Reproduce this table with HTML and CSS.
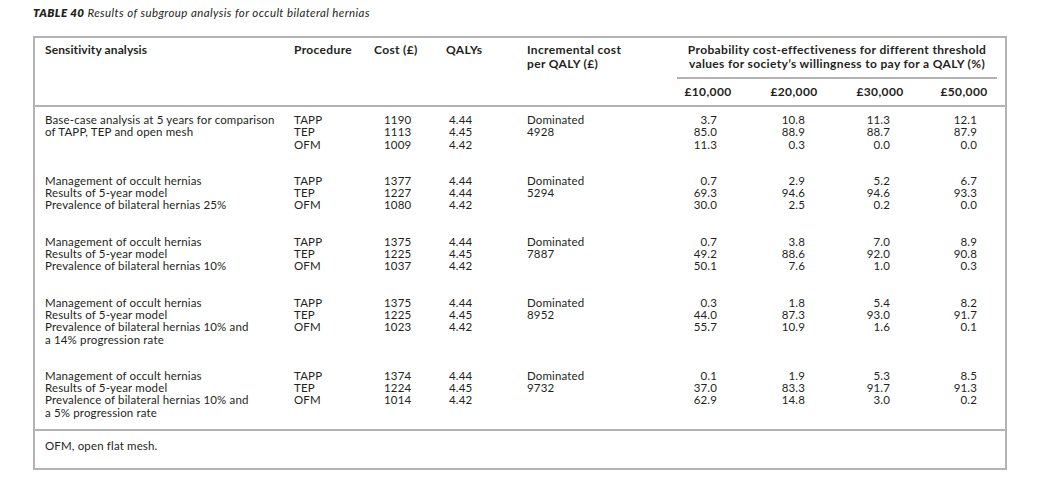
FILE: index.html
```html
<!DOCTYPE html>
<html lang="en">
<head>
<meta charset="utf-8">
<title>Table 40</title>
<link rel="stylesheet" href="styles.css">
</head>
<body>
<div class="page">
  <p class="caption"><b>TABLE 40</b> Results of subgroup analysis for occult bilateral hernias</p>
  <div class="box">
    <table class="tbl">
      <colgroup>
        <col class="w1"><col class="w2"><col class="w3"><col class="w4"><col class="w5">
        <col class="w6"><col class="w7"><col class="w8"><col class="w9">
      </colgroup>
      <thead>
        <tr>
          <th rowspan="2" class="c1">Sensitivity analysis</th>
          <th rowspan="2" class="c2">Procedure</th>
          <th rowspan="2" class="c3">Cost (£)</th>
          <th rowspan="2" class="c4">QALYs</th>
          <th rowspan="2" class="c5">Incremental cost<br>per QALY (£)</th>
          <th colspan="4" class="prob"><div class="prob-line">Probability cost-effectiveness for different threshold<br>values for society’s willingness to pay for a QALY (%)</div></th>
        </tr>
        <tr class="thr">
          <th>£10,000</th><th>£20,000</th><th>£30,000</th><th>£50,000</th>
        </tr>
      </thead>
      <tbody class="grp first">
        <tr><td class="c1">Base-case analysis at 5 years for comparison</td><td class="c2">TAPP</td><td class="c3">1190</td><td class="c4">4.44</td><td class="c5">Dominated</td><td class="p6">3.7</td><td class="p7">10.8</td><td class="p8">11.3</td><td class="p9">12.1</td></tr>
        <tr><td class="c1">of TAPP, TEP and open mesh</td><td class="c2">TEP</td><td class="c3">1113</td><td class="c4">4.45</td><td class="c5">4928</td><td class="p6">85.0</td><td class="p7">88.9</td><td class="p8">88.7</td><td class="p9">87.9</td></tr>
        <tr><td class="c1"></td><td class="c2">OFM</td><td class="c3">1009</td><td class="c4">4.42</td><td class="c5"></td><td class="p6">11.3</td><td class="p7">0.3</td><td class="p8">0.0</td><td class="p9">0.0</td></tr>
      </tbody>
      <tbody class="grp">
        <tr><td class="c1">Management of occult hernias</td><td class="c2">TAPP</td><td class="c3">1377</td><td class="c4">4.44</td><td class="c5">Dominated</td><td class="p6">0.7</td><td class="p7">2.9</td><td class="p8">5.2</td><td class="p9">6.7</td></tr>
        <tr><td class="c1">Results of 5-year model</td><td class="c2">TEP</td><td class="c3">1227</td><td class="c4">4.44</td><td class="c5">5294</td><td class="p6">69.3</td><td class="p7">94.6</td><td class="p8">94.6</td><td class="p9">93.3</td></tr>
        <tr><td class="c1">Prevalence of bilateral hernias 25%</td><td class="c2">OFM</td><td class="c3">1080</td><td class="c4">4.42</td><td class="c5"></td><td class="p6">30.0</td><td class="p7">2.5</td><td class="p8">0.2</td><td class="p9">0.0</td></tr>
      </tbody>
      <tbody class="grp">
        <tr><td class="c1">Management of occult hernias</td><td class="c2">TAPP</td><td class="c3">1375</td><td class="c4">4.44</td><td class="c5">Dominated</td><td class="p6">0.7</td><td class="p7">3.8</td><td class="p8">7.0</td><td class="p9">8.9</td></tr>
        <tr><td class="c1">Results of 5-year model</td><td class="c2">TEP</td><td class="c3">1225</td><td class="c4">4.45</td><td class="c5">7887</td><td class="p6">49.2</td><td class="p7">88.6</td><td class="p8">92.0</td><td class="p9">90.8</td></tr>
        <tr><td class="c1">Prevalence of bilateral hernias 10%</td><td class="c2">OFM</td><td class="c3">1037</td><td class="c4">4.42</td><td class="c5"></td><td class="p6">50.1</td><td class="p7">7.6</td><td class="p8">1.0</td><td class="p9">0.3</td></tr>
      </tbody>
      <tbody class="grp">
        <tr><td class="c1">Management of occult hernias</td><td class="c2">TAPP</td><td class="c3">1375</td><td class="c4">4.44</td><td class="c5">Dominated</td><td class="p6">0.3</td><td class="p7">1.8</td><td class="p8">5.4</td><td class="p9">8.2</td></tr>
        <tr><td class="c1">Results of 5-year model</td><td class="c2">TEP</td><td class="c3">1225</td><td class="c4">4.45</td><td class="c5">8952</td><td class="p6">44.0</td><td class="p7">87.3</td><td class="p8">93.0</td><td class="p9">91.7</td></tr>
        <tr><td class="c1">Prevalence of bilateral hernias 10% and<br>a 14% progression rate</td><td class="c2">OFM</td><td class="c3">1023</td><td class="c4">4.42</td><td class="c5"></td><td class="p6">55.7</td><td class="p7">10.9</td><td class="p8">1.6</td><td class="p9">0.1</td></tr>
      </tbody>
      <tbody class="grp last">
        <tr><td class="c1">Management of occult hernias</td><td class="c2">TAPP</td><td class="c3">1374</td><td class="c4">4.44</td><td class="c5">Dominated</td><td class="p6">0.1</td><td class="p7">1.9</td><td class="p8">5.3</td><td class="p9">8.5</td></tr>
        <tr><td class="c1">Results of 5-year model</td><td class="c2">TEP</td><td class="c3">1224</td><td class="c4">4.45</td><td class="c5">9732</td><td class="p6">37.0</td><td class="p7">83.3</td><td class="p8">91.7</td><td class="p9">91.3</td></tr>
        <tr><td class="c1">Prevalence of bilateral hernias 10% and<br>a 5% progression rate</td><td class="c2">OFM</td><td class="c3">1014</td><td class="c4">4.42</td><td class="c5"></td><td class="p6">62.9</td><td class="p7">14.8</td><td class="p8">3.0</td><td class="p9">0.2</td></tr>
      </tbody>
    </table>
    <div class="foot">OFM, open flat mesh.</div>
  </div>
</div>
</body>
</html>
```

FILE: styles.css
```css
* { box-sizing: border-box; }
html, body { margin: 0; padding: 0; background: #ffffff; }
body {
  font-family: "Lato", "Open Sans", "DejaVu Sans", sans-serif;
  color: #231f20;
  font-size: 11.5px;
  letter-spacing: 0.15px;
}
.page {
  padding: 6px 0 0 33px;
  width: 1040px;
}
.caption {
  margin: 0 0 16px 0;
  font-style: italic;
  font-size: 11.5px;
  letter-spacing: 0.4px;
  line-height: 14px;
}
.caption b { font-weight: 800; }

.box {
  width: 974px;
  border: 2px solid #b3b3b3;
}
.tbl {
  width: 970px;
  border-collapse: collapse;
  table-layout: fixed;
}
.w1 { width: 250px; }
.w2 { width: 80px; }
.w3 { width: 72px; }
.w4 { width: 81px; }
.w5 { width: 147px; }
.w6 { width: 86px; }
.w7 { width: 86px; }
.w8 { width: 86px; }
.w9 { width: 82px; }

thead { border-bottom: 2px solid #b3b3b3; }
th {
  font-weight: 700;
  font-size: 12px;
  letter-spacing: 0.35px;
  text-align: left;
  vertical-align: top;
  line-height: 14px;
  padding: 5px 0 0 9px;
  white-space: nowrap;
}
th.c1 { padding-left: 10px; letter-spacing: 0.1px; }
th.prob {
  padding: 5px 8px 0 12px;
  text-align: center;
}
.prob-line {
  border-bottom: 2px solid #b3b3b3;
  padding-bottom: 6px;
}
.thr th {
  text-align: center;
  padding: 6px 0 6px 0;
}

td {
  line-height: 12.3px;
  padding: 0 0 0 9px;
  vertical-align: top;
  white-space: nowrap;
}
td.c1 { padding-left: 10px; }
td.c3 { padding-left: 19px; }
td.c4 { padding-left: 12px; }
td.p6, td.p7, td.p8, td.p9 { text-align: right; padding-left: 0; }
td.p6 { padding-right: 34px; }
td.p7 { padding-right: 32px; }
td.p8 { padding-right: 33px; }
td.p9 { padding-right: 28px; }

.grp tr:first-child td { padding-top: 12px; }
.grp tr:last-child td { padding-bottom: 12px; }
.grp.first tr:first-child td { padding-top: 7px; }
.grp.last tr:last-child td { padding-bottom: 10px; }
.grp.last { border-bottom: 2px solid #b3b3b3; }

.foot {
  padding: 9px 0 16px 10px;
  line-height: 12.3px;
}
```
